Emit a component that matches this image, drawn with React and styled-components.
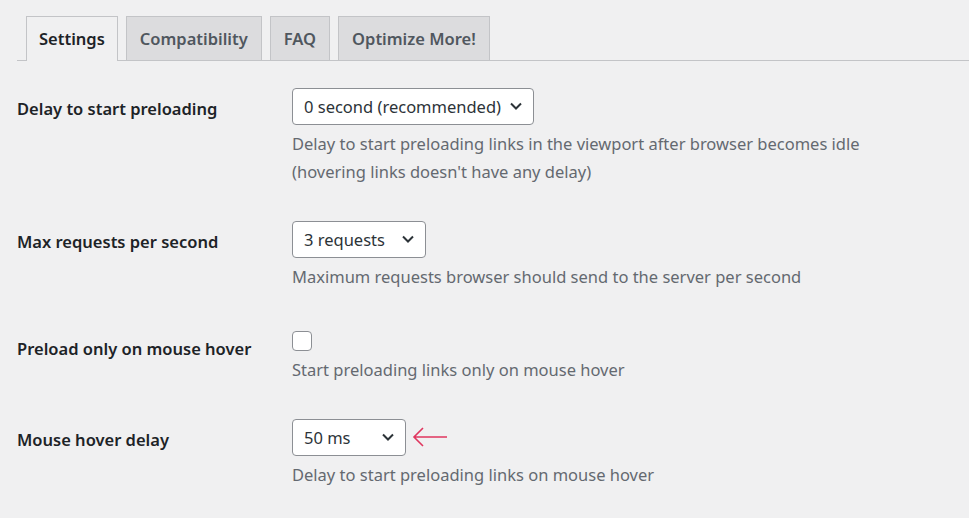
import React from "react";
import styled, { createGlobalStyle } from "styled-components";

const GlobalStyle = createGlobalStyle`
  html, body {
    margin: 0;
    padding: 0;
    background: #f0f0f1;
  }
  body {
    font-family: "Segoe UI", "Noto Sans", sans-serif;
    color: #1d2327;
  }
`;

const Page = styled.div`
  width: 969px;
  height: 518px;
  overflow: hidden;
  padding: 16px 0 0 17px;
  box-sizing: border-box;
`;

const TabBar = styled.nav`
  display: flex;
  align-items: flex-end;
  gap: 8px;
  padding-left: 9px;
  border-bottom: 1px solid #c3c4c7;
  margin-right: -20px;
`;

const Tab = styled.a`
  display: block;
  padding: 7px ${(p) => (p.$active ? "12px" : "13px")} 6px;
  font-size: 16.5px;
  line-height: 30px;
  font-weight: 600;
  text-decoration: none;
  border: 1px solid #c3c4c7;
  border-bottom: none;
  margin-bottom: ${(p) => (p.$active ? "-1px" : "0")};
  padding-bottom: ${(p) => (p.$active ? "7px" : "6px")};
  background: ${(p) => (p.$active ? "#f0f0f1" : "#dcdcde")};
  color: ${(p) => (p.$active ? "#1d2327" : "#50575e")};
  white-space: nowrap;
`;

const Table = styled.div`
  display: flex;
  flex-direction: column;
  padding-top: 9px;
`;

const Row = styled.div`
  display: flex;
  align-items: flex-start;
`;

const Label = styled.div`
  width: 263px;
  flex: none;
  padding-top: ${(p) => p.$top || 27}px;
  font-size: 16.5px;
  line-height: 23px;
  font-weight: 600;
  color: #1d2327;
`;

const Field = styled.div`
  padding: 17.5px 12px;
  display: flex;
  flex-direction: column;
`;

const Inline = styled.div`
  display: flex;
  align-items: center;
`;

const SelectBox = styled.div`
  box-sizing: border-box;
  width: ${(p) => p.$w}px;
  height: 37px;
  border: 1px solid #8c8f94;
  border-radius: 4px;
  background: #fff;
  display: flex;
  align-items: center;
  justify-content: space-between;
  padding: 0 10px 0 11px;
  font-size: 16.5px;
  color: #2c3338;
`;

const Chevron = styled.svg`
  width: 14px;
  height: 14px;
  flex: none;
`;

const Checkbox = styled.span`
  display: block;
  box-sizing: border-box;
  width: 20px;
  height: 20px;
  margin-top: 5px;
  border: 1px solid #8c8f94;
  border-radius: 4px;
  background: #fff;
`;

const Description = styled.p`
  margin: ${(p) => p.$gap || 5}px 0 0;
  font-size: 16.5px;
  line-height: 28px;
  color: #646970;
`;

const Pointer = styled.svg`
  margin-left: 6px;
  width: 36px;
  height: 22px;
`;

function Select({ width, children }) {
  return (
    <SelectBox $w={width}>
      <span>{children}</span>
      <Chevron viewBox="0 0 14 14">
        <path d="M2 4.5 L7 9.5 L12 4.5" fill="none" stroke="#2c3338" strokeWidth="2" />
      </Chevron>
    </SelectBox>
  );
}

export default function App() {
  return (
    <Page>
      <GlobalStyle />
      <TabBar>
        <Tab $active>Settings</Tab>
        <Tab>Compatibility</Tab>
        <Tab>FAQ</Tab>
        <Tab>Optimize More!</Tab>
      </TabBar>

      <Table>
        <Row>
          <Label>Delay to start preloading</Label>
          <Field>
            <Select width={242}>0 second (recommended)</Select>
            <Description>
              Delay to start preloading links in the viewport after browser becomes idle
              <br />
              (hovering links doesn't have any delay)
            </Description>
          </Field>
        </Row>

        <Row>
          <Label>Max requests per second</Label>
          <Field>
            <Select width={134}>3 requests</Select>
            <Description>Maximum requests browser should send to the server per second</Description>
          </Field>
        </Row>

        <Row>
          <Label $top={29}>Preload only on mouse hover</Label>
          <Field>
            <Checkbox />
            <Description>Start preloading links only on mouse hover</Description>
          </Field>
        </Row>

        <Row>
          <Label>Mouse hover delay</Label>
          <Field>
            <Inline>
              <Select width={114}>50 ms</Select>
              <Pointer viewBox="0 0 36 22">
                <path d="M2 11 H35 M11 2 L2 11 L11 20" fill="none" stroke="#e0365f" strokeWidth="1.6" />
              </Pointer>
            </Inline>
            <Description>Delay to start preloading links on mouse hover</Description>
          </Field>
        </Row>
      </Table>
    </Page>
  );
}
